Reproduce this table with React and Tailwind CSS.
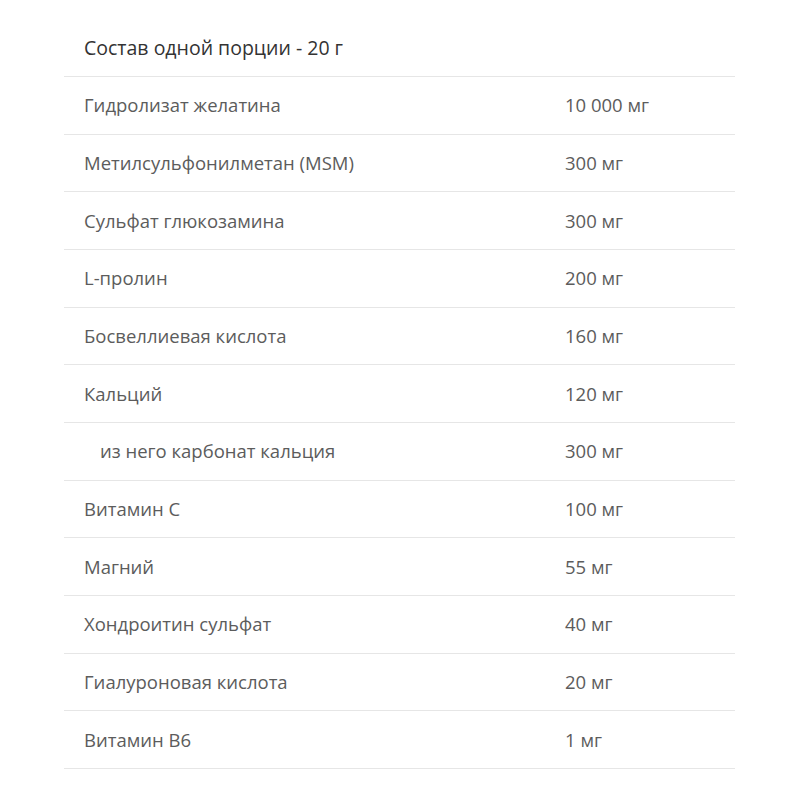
export default function App() {
  const rows = [
    ["Гидролизат желатина", "10 000 мг"],
    ["Метилсульфонилметан (MSM)", "300 мг"],
    ["Сульфат глюкозамина", "300 мг"],
    ["L-пролин", "200 мг"],
    ["Босвеллиевая кислота", "160 мг"],
    ["Кальций", "120 мг"],
    ["из него карбонат кальция", "300 мг", true],
    ["Витамин C", "100 мг"],
    ["Магний", "55 мг"],
    ["Хондроитин сульфат", "40 мг"],
    ["Гиалуроновая кислота", "20 мг"],
    ["Витамин B6", "1 мг"],
  ];
  return (
    <div className="w-[800px] h-[800px] bg-white pt-[19px] pl-[64px]" style={{ fontFamily: '"Open Sans", sans-serif' }}>
      <div className="w-[671px]">
        <div className="h-[58px] flex items-center pl-[20px] border-b border-[#e6e6e6] text-[19.5px] text-[#333]">
          Состав одной порции - 20 г
        </div>
        {rows.map(([n, v, ind], i) => (
          <div key={i} className="h-[57.67px] flex items-center border-b border-[#e6e6e6] text-[18.5px] text-[#5c5c5c]">
            <div className={ind ? "w-[501px] pl-[36px]" : "w-[501px] pl-[20px]"}>{n}</div>
            <div>{v}</div>
          </div>
        ))}
      </div>
    </div>
  );
}
